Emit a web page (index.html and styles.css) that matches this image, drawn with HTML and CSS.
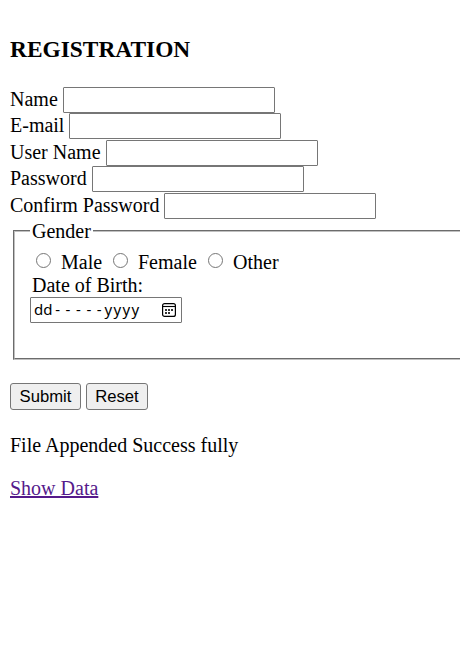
FILE: index.html
```html
<!DOCTYPE html>
<html lang="en">
<head>
<meta charset="utf-8">
<title>Registration</title>
<link rel="stylesheet" href="styles.css">
</head>
<body>
<h3 class="title">REGISTRATION</h3>
<form class="form">
  <div class="row"><label for="name">Name</label><input class="field" id="name" type="text"></div>
  <div class="row"><label for="email">E-mail</label><input class="field" id="email" type="text"></div>
  <div class="row"><label for="user">User Name</label><input class="field" id="user" type="text"></div>
  <div class="row"><label for="pass">Password</label><input class="field" id="pass" type="password"></div>
  <div class="row"><label for="confirm">Confirm Password</label><input class="field" id="confirm" type="password"></div>
  <fieldset class="group">
    <legend class="legend">Gender</legend>
    <div class="choices">
      <label class="choice male"><span class="radio"></span>Male</label>
      <label class="choice female"><span class="radio"></span>Female</label>
      <label class="choice"><span class="radio"></span>Other</label>
    </div>
    <div class="birth">Date of Birth:</div>
    <div class="date">
      <span>dd</span><span class="dashes"><span>-</span><span>-</span><span>-</span><span>-</span><span>-</span></span><span class="year">yyyy</span>
      <svg class="calendar" width="14" height="14" viewBox="0 0 14 14">
        <rect x=".6" y=".6" width="12.8" height="12.8" rx="2" fill="none" stroke="#000" stroke-width="1.2"/>
        <path d="M.5 3.5h13" stroke="#000" stroke-width="1.1"/>
        <path d="M3 6h2v2H3zM6 6h2v2H6zM9 6h2v2H9zM3 9h2v2H3zM6 9h2v2H6z" fill="#333"/>
      </svg>
    </div>
  </fieldset>
  <div class="actions">
    <button class="button submit" type="button">Submit</button>
    <button class="button" type="reset">Reset</button>
  </div>
</form>
<p class="message">File Appended Success fully</p>
<a class="link" href="#">Show Data</a>
</body>
</html>
```
FILE: styles.css
```css
* { box-sizing: border-box; }
html { overflow: hidden; background: #fff; }
body {
  margin: 0;
  padding: 38px 0 0 10px;
  font: 20px/23px "Liberation Serif", "Times New Roman", serif;
  color: #000;
}
.title { margin: 0 0 25.8px; font-size: 23.4px; line-height: 23px; }
.row { display: flex; gap: 5px; height: 26.5px; line-height: 24.2px; }
.field {
  width: 212px;
  height: 26px;
  padding: 1px 2px;
  border: 1px solid #767676;
  border-radius: 1px;
  background: #fff;
}
.group {
  height: 140px;
  margin: 0.5px 0 0 3px;
  padding: 8px 15px 0;
  border: 2px groove #c0c0c0;
  border-right: 0;
}
.legend { padding: 0 2px; }
.choices { display: flex; margin-left: 6px; }
.choice { display: flex; gap: 10px; width: 95px; }
.male { width: 77px; }
.radio {
  width: 15px;
  height: 15px;
  margin-top: 2px;
  border: 1px solid #767676;
  border-radius: 50%;
}
.birth { margin-left: 2px; }
.date {
  display: flex;
  align-items: center;
  width: 152px;
  height: 26px;
  padding: 0 5px 0 3px;
  border: 1px solid #767676;
  border-radius: 1px;
  font: 15px/22px "Noto Sans", sans-serif;
}
.date > span { padding-bottom: 2px; }
.dashes { display: flex; justify-content: space-around; width: 52px; }
.year { letter-spacing: 1.4px; }
.calendar { margin-left: auto; }
.actions { display: flex; gap: 5px; margin-top: 23px; }
.button {
  width: 62px;
  height: 27px;
  padding: 0;
  border: 1px solid #767676;
  border-radius: 3px;
  background: #efefef;
  color: #000;
  font: 16.67px/23px "Liberation Sans", Arial, sans-serif;
}
.submit { width: 71px; }
.message { margin: 24px 0 20px; }
.link { color: #551a8b; text-decoration-thickness: 2px; }
```
